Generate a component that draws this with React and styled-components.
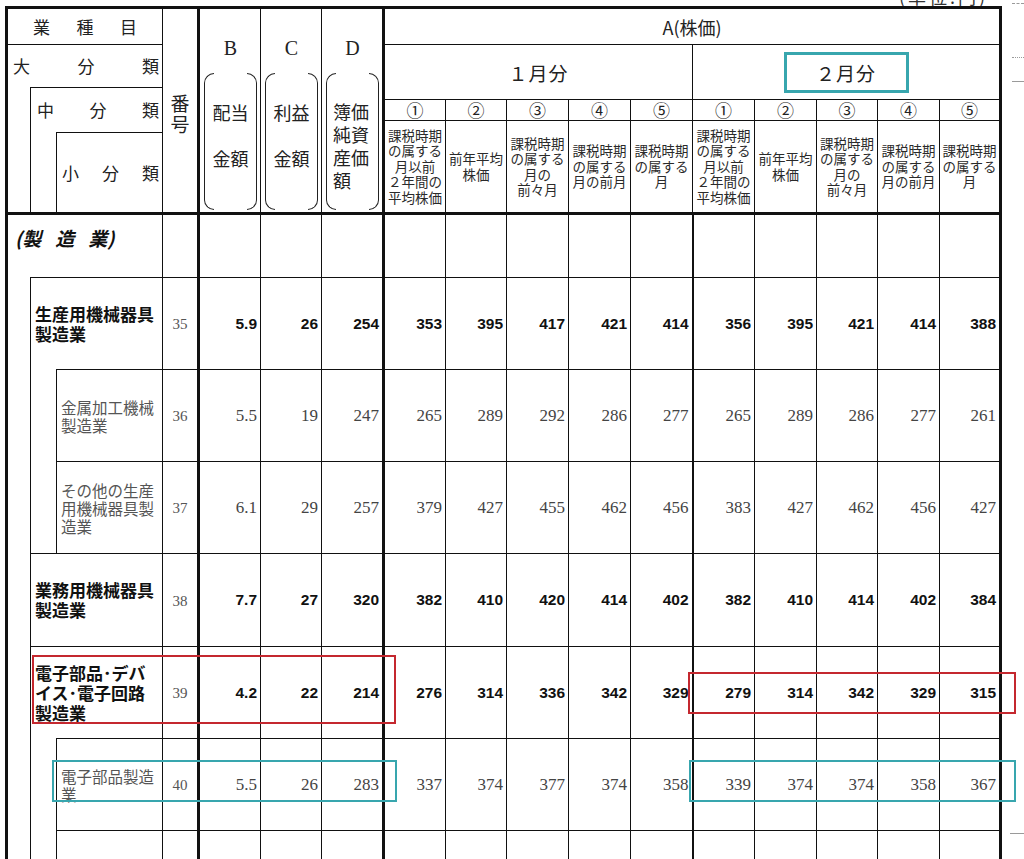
import React from 'react'
import styled, { createGlobalStyle } from 'styled-components'

const GlobalStyle = createGlobalStyle`
  html, body {
    margin: 0;
    padding: 0;
    background: #fff;
    overflow: hidden;
  }
  body {
    font-family: "Noto Sans CJK JP", "Noto Sans", sans-serif;
    color: #222;
  }
`

const LINE = '#111'
const RED = '#c4282f'
const TEAL = '#38a6ae'

const Page = styled.div`
  position: relative;
  display: flex;
  align-items: flex-start;
  width: 1024px;
  height: 859px;
  overflow: hidden;
`

const Sheet = styled.div`
  display: flex;
  flex-direction: column;
  padding-left: 5px;
`

const Unit = styled.div`
  align-self: flex-end;
  height: 20px;
  margin-top: -14px;
  margin-right: 14px;
  font-size: 18px;
  line-height: 20px;
  letter-spacing: 3px;
  color: #333;
`

const Table = styled.table`
  border-collapse: collapse;
  table-layout: fixed;
  width: 994px;
  border: 3px solid ${LINE};
`

const Col = styled.col`
  width: ${p => p.$w}px;
`

const Tr = styled.tr`
  height: ${p => p.$h}px;
`

const Td = styled.td`
  padding: 0;
  border: 1px solid ${LINE};
  border-left-width: ${p => p.$lw || 1}px;
  border-top-width: ${p => p.$tw || 1}px;
  ${p => p.$openTop && 'border-top-style: hidden;'}
  vertical-align: ${p => p.$va || 'middle'};
  text-align: center;
  overflow: visible;
`

const Spread = styled.div`
  display: flex;
  justify-content: space-between;
  padding: ${p => p.$pad};
  font-size: 17px;
  line-height: 20px;
  color: #222;
`

const HeadText = styled.div`
  font-size: ${p => p.$size || 18}px;
  line-height: ${p => p.$lh || 22}px;
  color: #222;
  padding-top: ${p => p.$pt || 0}px;
`

const Stack = styled.div`
  display: flex;
  flex-direction: column;
  padding: 29px 3px 0 4px;
`

const Letter = styled.div`
  font-family: "Liberation Serif", "Times New Roman", serif;
  font-size: 20px;
  line-height: 20px;
  color: #222;
`

const Bracket = styled.div`
  position: relative;
  height: 137px;
  margin-top: 15px;
  box-sizing: border-box;
  padding-top: ${p => p.$pt}px;
  display: flex;
  flex-direction: column;
  align-items: ${p => (p.$left ? 'flex-start' : 'center')};
  padding-left: ${p => (p.$left ? 7 : 0)}px;
  gap: ${p => p.$gap || 0}px;
  font-size: 18px;
  line-height: ${p => p.$lh}px;
  color: #222;
  &::before,
  &::after {
    content: '';
    position: absolute;
    top: 0;
    bottom: 0;
    width: 9px;
    border: 1.5px solid #222;
  }
  &::before {
    left: 0;
    border-right: none;
    border-radius: 10px 0 0 10px;
  }
  &::after {
    right: 0;
    border-left: none;
    border-radius: 0 10px 10px 0;
  }
`

const Month = styled.div`
  display: inline-flex;
  align-items: center;
  justify-content: center;
  box-sizing: border-box;
  width: ${p => (p.$boxed ? 125 : 'auto')};
  width: ${p => (p.$boxed ? '125px' : 'auto')};
  height: 41px;
  border: 3px solid ${p => (p.$boxed ? TEAL : 'transparent')};
  font-size: 19px;
  color: #222;
  letter-spacing: 1px;
`

const Circled = styled.div`
  font-size: 17px;
  line-height: 20px;
  color: #222;
`

const Desc = styled.div`
  font-size: 13.5px;
  line-height: 15.5px;
  color: #2a2a2a;
  white-space: nowrap;
`

const Manufacture = styled.div`
  display: flex;
  gap: 14px;
  padding: 11px 0 0 7px;
  font-size: 19px;
  line-height: 24px;
  font-weight: 700;
  font-style: italic;
  color: #111;
`

const NameTd = styled(Td)`
  padding-left: 4px;
  text-align: left;
  white-space: nowrap;
  font-size: ${p => (p.$major ? 17 : 15.5)}px;
  font-weight: ${p => (p.$major ? 700 : 400)};
  line-height: ${p => (p.$major ? 20 : 18)}px;
  color: ${p => (p.$major ? '#111' : '#555')};
`

const NoTd = styled(Td)`
  font-family: "Liberation Serif", "Times New Roman", serif;
  font-size: 15px;
  color: #555;
  padding-top: 2px;
`

const NumTd = styled(Td)`
  text-align: right;
  padding-right: 3px;
  font-family: ${p => (p.$major ? '"Liberation Sans", Arial, sans-serif' : '"Liberation Serif", "Times New Roman", serif')};
  font-weight: ${p => (p.$major ? 700 : 400)};
  font-size: ${p => (p.$major ? 15.5 : 17)}px;
  color: ${p => (p.$major ? '#111' : '#444')};
`

const Margin = styled.div`
  display: flex;
  flex-direction: column;
  align-items: flex-end;
  flex: 1;
`

const Tick = styled.div`
  width: ${p => p.$w}px;
  margin-top: ${p => p.$top}px;
  border-top: 1px ${p => p.$style || 'solid'} #9a9a9a;
`

const Frame = styled.div`
  position: absolute;
  left: ${p => p.$x}px;
  top: ${p => p.$y}px;
  width: ${p => p.$w}px;
  height: ${p => p.$h}px;
  box-sizing: border-box;
  border: 2.5px solid ${p => p.$c};
  pointer-events: none;
`

const colWidths = [24, 26, 106, 36, 62, 61, 62, 62, 61, 62, 62, 62, 62, 62, 61, 62, 61]

const descs = [
  ['課税時期', 'の属する', '月以前', '２年間の', '平均株価'],
  ['前年平均', '株価'],
  ['課税時期', 'の属する', '月の', '前々月'],
  ['課税時期', 'の属する', '月の前月'],
  ['課税時期', 'の属する', '月'],
]

const rows = [
  { no: 35, level: 1, outer: 7, h: 92, label: ['生産用機械器具', '製造業'], b: '5.9', c: '26', d: '254', jan: [353, 395, 417, 421, 414], feb: [356, 395, 421, 414, 388] },
  { no: 36, level: 2, inner: 2, h: 92, label: ['金属加工機械', '製造業'], b: '5.5', c: '19', d: '247', jan: [265, 289, 292, 286, 277], feb: [265, 289, 286, 277, 261] },
  { no: 37, level: 2, h: 92, label: ['その他の生産', '用機械器具製', '造業'], b: '6.1', c: '29', d: '257', jan: [379, 427, 455, 462, 456], feb: [383, 427, 462, 456, 427] },
  { no: 38, level: 1, h: 93, label: ['業務用機械器具', '製造業'], b: '7.7', c: '27', d: '320', jan: [382, 410, 420, 414, 402], feb: [382, 410, 414, 402, 384] },
  { no: 39, level: 1, h: 92, label: ['電子部品･デバ', 'イス･電子回路', '製造業'], b: '4.2', c: '22', d: '214', jan: [276, 314, 336, 342, 329], feb: [279, 314, 342, 329, 315] },
  { no: 40, level: 2, inner: 2, h: 92, label: ['電子部品製造', '業'], b: '5.5', c: '26', d: '283', jan: [337, 374, 377, 374, 358], feb: [339, 374, 374, 358, 367] },
  { no: '', level: 2, h: 92, label: [], b: '', c: '', d: '', jan: ['', '', '', '', ''], feb: ['', '', '', '', ''] },
]

const circled = ['①', '②', '③', '④', '⑤']

function Lines({ lines }) {
  return lines.map((l, i) => (
    <React.Fragment key={i}>
      {i > 0 && <br />}
      {l}
    </React.Fragment>
  ))
}

function BodyRow({ row }) {
  const major = row.level === 1
  return (
    <Tr $h={row.h}>
      {row.outer && <Td rowSpan={row.outer} $openTop />}
      {row.inner && <Td rowSpan={row.inner} $openTop />}
      <NameTd colSpan={major ? 2 : 1} $major={major}>
        <Lines lines={row.label} />
      </NameTd>
      <NoTd>{row.no}</NoTd>
      <NumTd $major={major} $lw={3}>{row.b}</NumTd>
      <NumTd $major={major}>{row.c}</NumTd>
      <NumTd $major={major}>{row.d}</NumTd>
      {row.jan.map((v, i) => (
        <NumTd key={'j' + i} $major={major} $lw={i === 0 ? 3 : 1}>{v}</NumTd>
      ))}
      {row.feb.map((v, i) => (
        <NumTd key={'f' + i} $major={major} $lw={i === 0 ? 2 : 1}>{v}</NumTd>
      ))}
    </Tr>
  )
}

export default function App() {
  return (
    <Page>
      <GlobalStyle />
      <Sheet>
        <Unit>(単位:円)</Unit>
        <Table>
          <colgroup>
            {colWidths.map((w, i) => <Col key={i} $w={w} />)}
          </colgroup>
          <tbody>
            <Tr $h={37}>
              <Td colSpan={3}>
                <Spread $pad="0 25px">
                  <span>業</span><span>種</span><span>目</span>
                </Spread>
              </Td>
              <Td rowSpan={6}>
                <HeadText $size={19} $lh={21} $pt={4}>番<br />号</HeadText>
              </Td>
              <Td rowSpan={6} $lw={3} $va="top">
                <Stack>
                  <Letter>B</Letter>
                  <Bracket $pt={28} $lh={22} $gap={24}>
                    <span>配当</span>
                    <span>金額</span>
                  </Bracket>
                </Stack>
              </Td>
              <Td rowSpan={6} $va="top">
                <Stack>
                  <Letter>C</Letter>
                  <Bracket $pt={28} $lh={22} $gap={24}>
                    <span>利益</span>
                    <span>金額</span>
                  </Bracket>
                </Stack>
              </Td>
              <Td rowSpan={6} $va="top">
                <Stack>
                  <Letter>D</Letter>
                  <Bracket $pt={27} $lh={23} $left>
                    <span>簿価</span>
                    <span>純資</span>
                    <span>産価</span>
                    <span>額</span>
                  </Bracket>
                </Stack>
              </Td>
              <Td colSpan={10} $lw={3}>
                <HeadText $size={18}>A(株価)</HeadText>
              </Td>
            </Tr>
            <Tr $h={43}>
              <Td colSpan={3}>
                <Spread $pad="0 3px 0 5px">
                  <span>大</span><span>分</span><span>類</span>
                </Spread>
              </Td>
              <Td colSpan={5} rowSpan={2} $lw={3}>
                <Month>１月分</Month>
              </Td>
              <Td colSpan={5} rowSpan={2}>
                <Month $boxed>２月分</Month>
              </Td>
            </Tr>
            <Tr $h={12}>
              <Td rowSpan={4} $openTop />
              <Td colSpan={2} rowSpan={3}>
                <Spread $pad="0 3px 0 6px">
                  <span>中</span><span>分</span><span>類</span>
                </Spread>
              </Td>
            </Tr>
            <Tr $h={21}>
              {[...circled, ...circled].map((c, i) => (
                <Td key={i} $lw={i === 0 ? 3 : 1}>
                  <Circled>{c}</Circled>
                </Td>
              ))}
            </Tr>
            <Tr $h={12}>
              {[...descs, ...descs].map((d, i) => (
                <Td key={i} rowSpan={2} $lw={i === 0 ? 3 : 1}>
                  <Desc><Lines lines={d} /></Desc>
                </Td>
              ))}
            </Tr>
            <Tr $h={81}>
              <Td $openTop />
              <Td>
                <Spread $pad="0 3px 0 5px">
                  <span>小</span><span>分</span><span>類</span>
                </Spread>
              </Td>
            </Tr>
            <Tr $h={64}>
              <Td colSpan={3} $tw={3} $va="top">
                <Manufacture>
                  <span>(製</span><span>造</span><span>業)</span>
                </Manufacture>
              </Td>
              <Td $tw={3} />
              <Td $tw={3} $lw={3} />
              <Td $tw={3} />
              <Td $tw={3} />
              {Array.from({ length: 10 }).map((_, i) => (
                <Td key={i} $tw={3} $lw={i === 0 ? 3 : i === 5 ? 2 : 1} />
              ))}
            </Tr>
            {rows.map((r, i) => <BodyRow key={i} row={r} />)}
          </tbody>
        </Table>
      </Sheet>
      <Margin>
        <Tick $w={12} $top={3} $style="dashed" />
        <Tick $w={12} $top={53} $style="dotted" />
        <Tick $w={12} $top={23} />
        <Tick $w={14} $top={751} />
      </Margin>
      <Frame $x={32} $y={655} $w={364} $h={69} $c={RED} />
      <Frame $x={688} $y={672} $w={328} $h={42} $c={RED} />
      <Frame $x={52} $y={760} $w={345} $h={42} $c={TEAL} />
      <Frame $x={689} $y={760} $w={327} $h={42} $c={TEAL} />
    </Page>
  )
}
